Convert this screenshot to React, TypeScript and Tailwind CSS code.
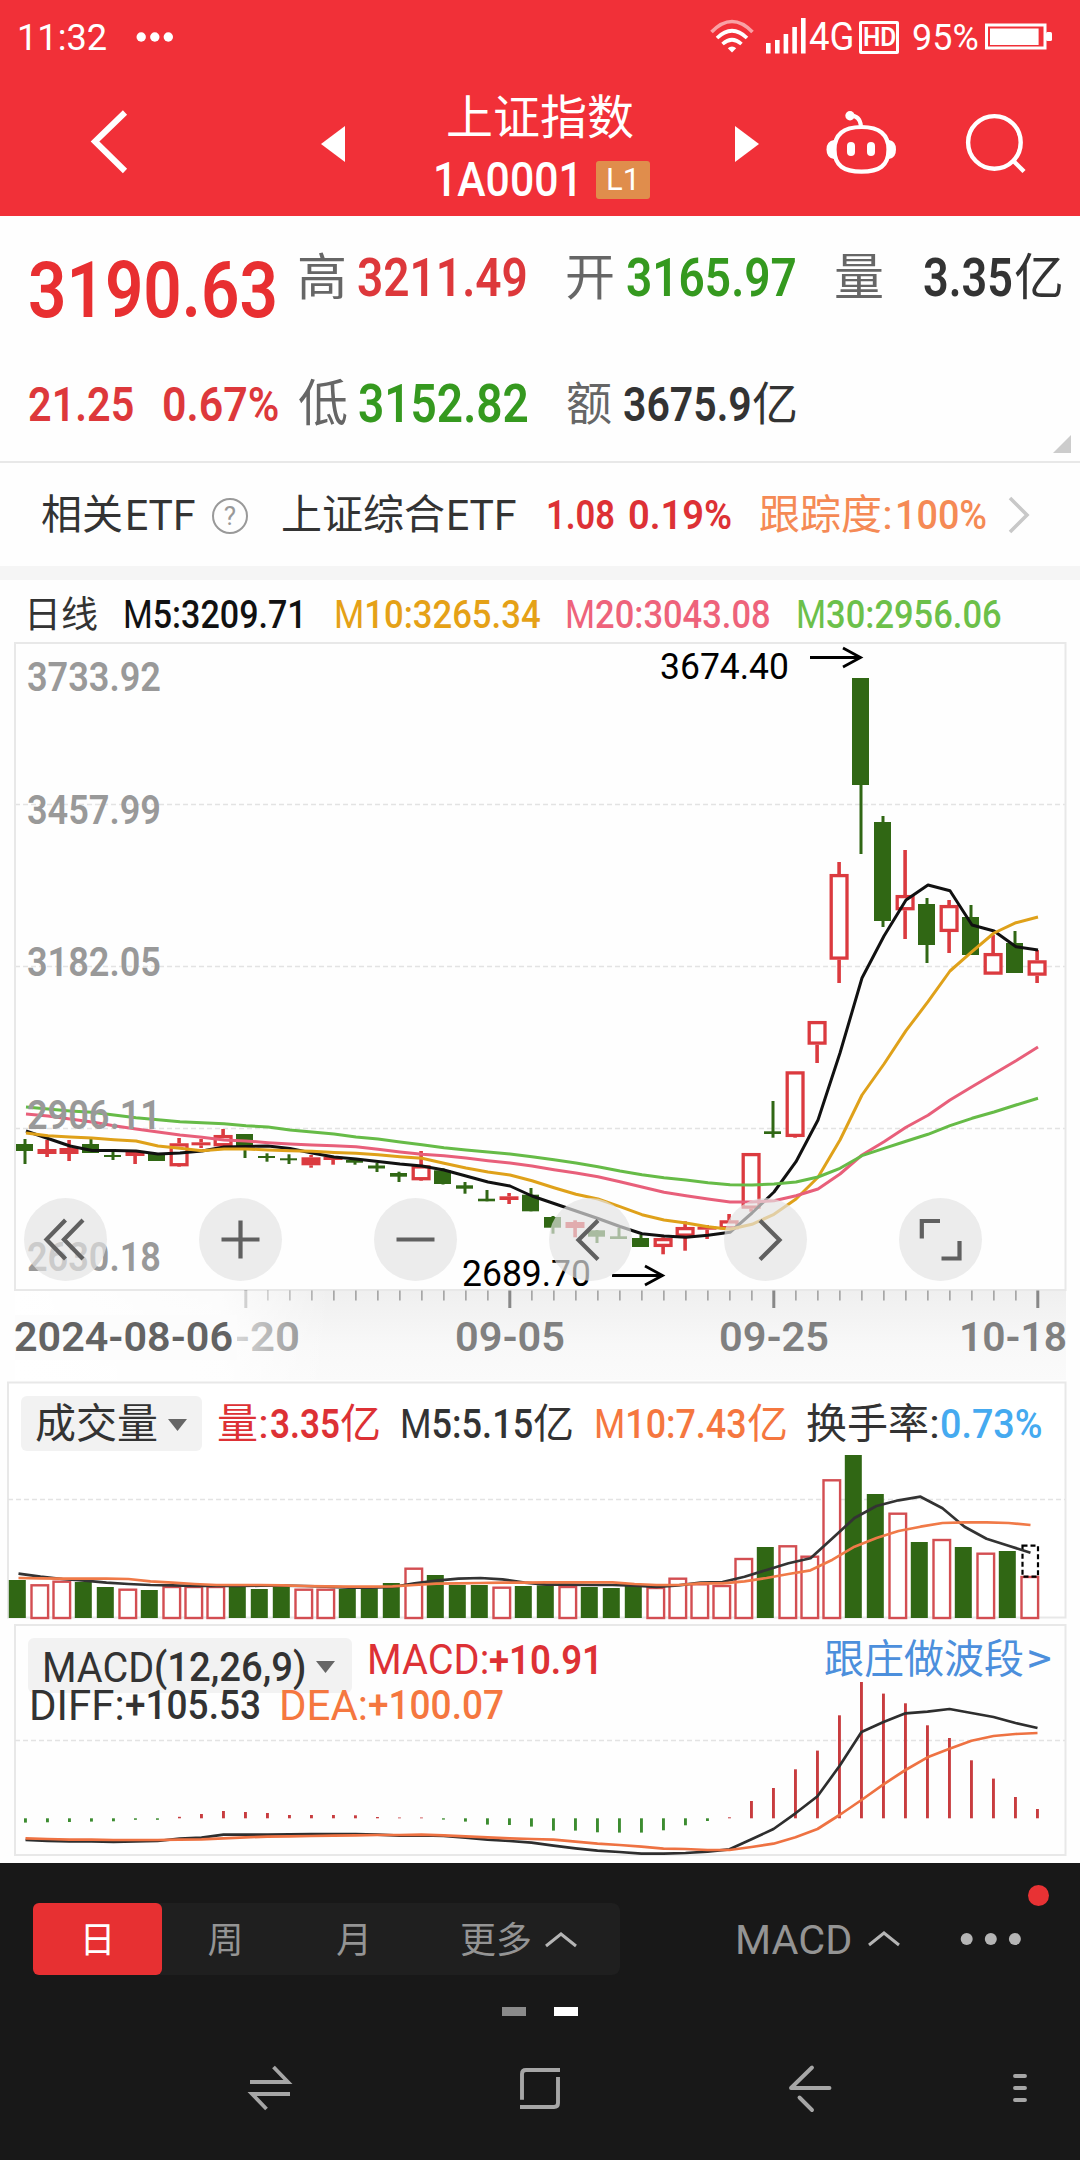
import { useLayoutEffect, useRef } from 'react';
import type { ReactNode } from 'react';

type Candle = [high: number, top: number, bottom: number, low: number, up: number];

const STEP = 22;
const RED = '#db3a3f';
const GREEN = '#306714';

const candles: Candle[] = [
  [1139, 1144, 1151, 1164, 0],
  [1140, 1149, 1154, 1157, 1],
  [1140, 1148, 1154, 1161, 1],
  [1139, 1144, 1153, 1153, 0],
  [1152, 1155, 1157, 1160, 0],
  [1151, 1152, 1156, 1164, 1],
  [1154, 1154, 1161, 1161, 0],
  [1138, 1143.3, 1166.3, 1167, 1],
  [1139, 1142.3, 1145.3, 1148, 1],
  [1129, 1135, 1146.3, 1146.3, 1],
  [1134, 1134, 1146.3, 1158, 0],
  [1153.3, 1156, 1158, 1161.7, 0],
  [1154.3, 1158.3, 1160.3, 1164, 0],
  [1155, 1157.3, 1165.3, 1167.7, 1],
  [1156.7, 1156.7, 1160, 1164.7, 1],
  [1159, 1160, 1162.7, 1164.7, 0],
  [1163, 1165.5, 1168.5, 1172, 0],
  [1171.7, 1173, 1176.7, 1182, 0],
  [1151, 1165.3, 1180.3, 1181, 1],
  [1168.3, 1170.3, 1184, 1184.5, 0],
  [1182, 1185.3, 1188.7, 1193.7, 0],
  [1190, 1198.7, 1201.3, 1201.3, 0],
  [1193, 1196.3, 1200, 1204, 1],
  [1188, 1194.7, 1211.3, 1211.3, 0],
  [1216, 1217, 1227.7, 1233.7, 0],
  [1220.3, 1222, 1228, 1237.3, 1],
  [1230, 1230.3, 1236.7, 1243, 0],
  [1227.7, 1236.3, 1239, 1239, 0],
  [1234.7, 1238, 1247, 1247, 0],
  [1237.3, 1238, 1247, 1254.3, 1],
  [1221.3, 1227, 1236.7, 1250.7, 1],
  [1225, 1226.7, 1229.7, 1239, 1],
  [1214, 1220.3, 1229.3, 1229.3, 1],
  [1153, 1153, 1208.7, 1211.7, 1],
  [1101, 1131.3, 1134, 1137.7, 0],
  [1071.3, 1071.3, 1137, 1137.7, 1],
  [1021, 1021, 1044.7, 1063, 1],
  [862, 874, 959.7, 983, 1],
  [678, 678, 785, 854, 0],
  [816, 822, 921, 927, 0],
  [850, 895, 910.3, 939, 1],
  [898, 904, 945, 963, 0],
  [900, 905, 932, 953, 1],
  [905, 917, 955, 955, 0],
  [935, 953, 974.7, 974.7, 1],
  [931, 943, 973, 973, 0],
  [950, 960.3, 975.7, 983, 1],
];

const ma5 = [
  1131, 1138.5, 1146, 1150.5, 1150.5, 1151, 1154, 1153, 1151, 1147, 1146.5, 1146, 1148.5, 1153, 1157,
  1159, 1161.5, 1164, 1166, 1170, 1176, 1182, 1186, 1196, 1203.5, 1211, 1218.5, 1226.5, 1233.7, 1236,
  1237.3, 1235.3, 1232.3, 1213, 1192, 1161.7, 1120, 1053, 978, 936, 900, 885, 890.7, 925, 931, 946.7,
  950,
];
const ma10 = [
  1133, 1135.7, 1137, 1138, 1139.7, 1141, 1146, 1148.3, 1150.7, 1149, 1149, 1150, 1150.7, 1151.3,
  1152.5, 1153.3, 1154.7, 1156.7, 1158.3, 1163.3, 1168, 1172, 1175, 1180.7, 1187.7, 1194.3, 1199,
  1206.7, 1214.7, 1220, 1223, 1226.7, 1229.3, 1224.3, 1214.3, 1199, 1177.3, 1140, 1095, 1064, 1030.7,
  1001.7, 971, 951.7, 933, 922.7, 917,
];
const ma20 = [
  1114, 1116, 1119, 1122, 1125.7, 1129, 1132, 1135, 1137.3, 1140, 1141, 1142.7, 1144, 1145, 1145.7,
  1146.7, 1149.3, 1152, 1154.3, 1155.7, 1158, 1160.7, 1163, 1166, 1169.7, 1173, 1176.7, 1181.7, 1187,
  1192.3, 1195.7, 1199, 1202, 1202, 1200.7, 1195.7, 1189, 1174, 1155, 1141.7, 1127.3, 1115.3, 1100,
  1086.7, 1073.7, 1060.7, 1047,
];
const ma30 = [
  1107, 1109, 1111, 1112.3, 1115, 1117.7, 1119.7, 1121.7, 1122.7, 1123.7, 1125.7, 1127, 1130, 1132,
  1134, 1137, 1139, 1142, 1144.7, 1147.7, 1150, 1152, 1154, 1156.7, 1159.7, 1163, 1166.7, 1171,
  1174.7, 1177.7, 1180, 1182.7, 1184.7, 1185, 1184, 1182, 1177, 1168.3, 1155.7, 1148.3, 1141.3,
  1134.3, 1125.7, 1118.3, 1112, 1105, 1098.3,
];

const volumes = [
  1580, 1584.3, 1580.7, 1582, 1587, 1588.7, 1590, 1586, 1586, 1586, 1586, 1589, 1586, 1588.7, 1588.7,
  1589, 1588.3, 1583, 1567.7, 1575, 1585, 1585, 1586.7, 1586, 1585.3, 1586, 1587, 1588, 1586, 1587,
  1577.7, 1583.3, 1585, 1558, 1547, 1545.3, 1555.7, 1479.3, 1455, 1494, 1512.7, 1542, 1539, 1547,
  1552.7, 1551, 1576,
];
const volMa5 = [
  1573.7, 1576.7, 1579, 1580.7, 1582.7, 1584, 1585, 1585.3, 1586, 1586, 1586, 1585.7, 1585.7, 1586,
  1586.7, 1587.7, 1587.7, 1587, 1583.3, 1580.7, 1578.7, 1578, 1579.3, 1582.7, 1584.7, 1584.7, 1585,
  1585, 1585.7, 1587, 1585.3, 1582.7, 1582, 1576.7, 1570, 1563.3, 1558.3, 1538.3, 1518, 1506, 1500.3,
  1496.7, 1508.3, 1526.7, 1538.7, 1545.7, 1552.7,
];
const volMa10 = [
  1578, 1578.3, 1578.7, 1578.7, 1578.7, 1579, 1581.3, 1582.7, 1584, 1585, 1585, 1585, 1585.3, 1586,
  1586.3, 1586.7, 1586.7, 1586.3, 1585, 1583.7, 1583.3, 1583, 1582.7, 1582.7, 1582.3, 1582.3, 1582.3,
  1582.3, 1584, 1585, 1585, 1583.3, 1583.3, 1581.3, 1578, 1574, 1570.3, 1559.7, 1546.7, 1538, 1531,
  1526.7, 1523, 1522.3, 1522.3, 1523, 1525,
];

// signed bar lengths in px, negative values hang below the zero line
const macd = [
  -4.3, -4, -3.7, -3.3, -3, -1.5, -1.5, 1.5, 4.3, 7.3, 6.3, 5.3, 3.3, 3.3, 3.3, 3, 1.3, 0.8, 0.8,
  -1.3, -3.3, -6.3, -6.7, -8.3, -12.3, -12.3, -14, -14.3, -14.3, -12, -7, -2.7, 1, 17.3, 30.3, 49,
  67.7, 103, 136.3, 124.7, 115, 93, 80.3, 58, 39.7, 21.3, 9.3,
];
const diff = [
  1840, 1841, 1841.3, 1841.3, 1842, 1841.3, 1841, 1838.7, 1837.7, 1834.7, 1834.7, 1834.7, 1834.3,
  1834, 1834, 1834, 1834.7, 1835.7, 1835.3, 1836, 1837.7, 1839.7, 1841, 1842.7, 1845.7, 1848.3,
  1850.7, 1852, 1853.7, 1853.7, 1853, 1851.7, 1849.3, 1839.3, 1829, 1813.3, 1796.3, 1766, 1732, 1722,
  1713.3, 1711.7, 1709, 1713, 1717, 1723, 1728,
];
const dea = [
  1838.3, 1839, 1839.7, 1839.7, 1840, 1840, 1840, 1839.7, 1839.3, 1838.3, 1837.3, 1836.7, 1836.3,
  1836, 1835.7, 1835.3, 1835, 1835, 1834.7, 1835.3, 1836.3, 1837.3, 1838.3, 1839, 1839.7, 1841.7,
  1843.7, 1845, 1846.7, 1848.7, 1849, 1850, 1850, 1847, 1843.7, 1837.3, 1829, 1815, 1800, 1784.3,
  1770, 1757.3, 1748.7, 1740.7, 1736, 1734, 1733,
];

const toPoints = (values: number[], start: number) =>
  values.map((y, i) => `${start + i * STEP},${y}`).join(' ');

interface FitProps {
  className?: string;
  children: ReactNode;
}

// Squeezes its text to the width of the box, the figures are set condensed.
const Fit = ({ className = '', children }: FitProps) => {
  const box = useRef<HTMLSpanElement>(null);
  const text = useRef<HTMLSpanElement>(null);

  useLayoutEffect(() => {
    if (!box.current || !text.current) return;
    const ratio = box.current.offsetWidth / text.current.offsetWidth;
    text.current.style.transform = `scaleX(${ratio})`;
  }, [children]);

  return (
    <span ref={box} className={`inline-block shrink-0 whitespace-nowrap leading-none ${className}`}>
      <span ref={text} className="inline-block origin-left">
        {children}
      </span>
    </span>
  );
};

const StatusBar = () => (
  <div className="flex h-[74px] items-center text-[37px]">
    <Fit className="ml-[17px] w-[90px]">11:32</Fit>
    <svg className="ml-[29px]" width="37" height="12" viewBox="136 31 37 12" fill="#fff">
      <circle cx="141.2" cy="37" r="4.7" />
      <circle cx="154.8" cy="37" r="4.7" />
      <circle cx="168.3" cy="37" r="4.7" />
    </svg>
    <svg className="ml-[535px] shrink-0" width="100" height="40" viewBox="708 17 100 40">
      <g fill="none" stroke="#fff" strokeWidth="3.6">
        <path d="M711.5 32 Q732 11 752.5 32" opacity=".55" />
        <path d="M717 38 Q732 23.5 747 38" />
        <path d="M722.5 44 Q732 35.5 741.5 44" />
      </g>
      <path d="M732 52.5 l-4.2 -4.2 a6 6 0 0 1 8.4 0z" fill="#fff" />
      <g fill="#fff">
        <rect x="766" y="43" width="4.6" height="10.5" />
        <rect x="775" y="40" width="4.6" height="13.5" />
        <rect x="783.6" y="34" width="4.6" height="19.5" />
        <rect x="792.3" y="27" width="4.6" height="26.5" />
        <rect x="801" y="18" width="4.6" height="35.5" />
      </g>
    </svg>
    <Fit className="ml-px w-[45px] pt-px text-[39px]">4G</Fit>
    <span className="ml-[5px] flex h-[33px] w-[40px] items-center justify-center rounded-[2px] border-[3.5px] border-white">
      <Fit className="w-[33px] text-[26px] font-semibold">HD</Fit>
    </span>
    <Fit className="ml-[13px] w-[67px]">95%</Fit>
    <svg className="ml-[4px]" width="72" height="30" viewBox="983 22 72 30">
      <rect x="986.5" y="25" width="58.5" height="23" fill="none" stroke="#fff" strokeWidth="3" />
      <rect x="990" y="28.5" width="48.6" height="16.5" fill="#fff" />
      <rect x="1046" y="32" width="6" height="9" rx="1.5" fill="#fff" />
    </svg>
  </div>
);

const TitleBar = () => (
  <div className="flex h-[142px] items-center">
    <svg className="ml-[86px]" width="46" height="74" viewBox="86 108 46 74">
      <path d="M125 112.5 L95 141.5 L125 171" fill="none" stroke="#fff" strokeWidth="6" />
    </svg>
    <svg className="ml-[189px]" width="24" height="38" viewBox="321 126 24 38">
      <path d="M345 126 V162 L321 144z" fill="#fff" />
    </svg>
    <div className="ml-[88px] h-full w-[219px]">
      <div className="mt-[14px] ml-[13px] flex h-[58px] items-center text-[47px] leading-none">上证指数</div>
      <div className="flex h-[67px] items-center">
        <Fit className="w-[150px] text-[49px] font-medium">1A0001</Fit>
        <span className="ml-[13px] flex h-[38px] w-[54px] items-center justify-center rounded-[3px] bg-[#e08d4c] text-[31px] leading-none">
          L1
        </span>
      </div>
    </div>
    <svg className="ml-[83px]" width="24" height="38" viewBox="735 126 24 38">
      <path d="M735 126 V162 L759 144z" fill="#fff" />
    </svg>
    <svg className="ml-[65px]" width="74" height="70" viewBox="824 110 74 70">
      <circle cx="850" cy="115.7" r="4.7" fill="#fff" />
      <path d="M850 115.5 Q860 115.5 861 126" fill="none" stroke="#fff" strokeWidth="4" />
      <path
        d="M861.5 127 C879 127 888.5 134 888.5 149.5 C888.5 166 879 171.7 861.5 171.7 C844 171.7 834.5 166 834.5 149.5 C834.5 134 844 127 861.5 127z"
        fill="none"
        stroke="#fff"
        strokeWidth="4.2"
      />
      <path d="M834 140 Q826.5 141 826.5 149.5 Q826.5 158 834 159z" fill="#fff" />
      <path d="M889 140 Q896 141 896 149.5 Q896 158 889 159z" fill="#fff" />
      <rect x="847" y="142" width="8" height="14" rx="4" fill="#fff" />
      <rect x="867" y="142" width="8" height="14" rx="4" fill="#fff" />
    </svg>
    <svg className="ml-[66px]" width="64" height="70" viewBox="964 110 64 70">
      <circle cx="994.4" cy="142.4" r="26.3" fill="none" stroke="#fff" strokeWidth="4.4" />
      <path d="M1013 160.5 L1024 171.5" stroke="#fff" strokeWidth="4.4" />
    </svg>
  </div>
);

const Quote = () => (
  <section className="relative h-[247px] border-b-2 border-[#e8e8e8] text-[50px] leading-none text-[#666]">
    <div className="flex h-[121px] items-center pt-[2px]">
      <Fit className="mt-[27px] ml-[28px] w-[250px] text-[77px] font-semibold text-[#e82f31]">3190.63</Fit>
      <span className="ml-[19px]">高</span>
      <Fit className="mt-[2px] ml-[10px] w-[171px] text-[53px] font-semibold text-[#dd383b]">3211.49</Fit>
      <span className="ml-[37px]">开</span>
      <Fit className="mt-[2px] ml-[11px] w-[171px] text-[53px] font-semibold text-[#35991f]">3165.97</Fit>
      <span className="ml-[37px]">量</span>
      <Fit className="mt-[2px] ml-[39px] w-[90px] text-[53px] font-semibold text-[#333]">3.35</Fit>
      <span className="ml-px text-[#333]">亿</span>
    </div>
    <div className="mt-[36px] flex h-[60px] items-center pt-[2px]">
      <Fit className="mt-px ml-[28px] w-[106px] text-[48px] font-semibold text-[#dd383b]">21.25</Fit>
      <Fit className="mt-px ml-[28px] w-[117px] text-[48px] font-semibold text-[#dd383b]">0.67%</Fit>
      <span className="ml-[19px]">低</span>
      <Fit className="ml-[10px] w-[171px] text-[53px] font-semibold text-[#35991f]">3152.82</Fit>
      <span className="ml-[37px] text-[46px]">额</span>
      <Fit className="mt-px ml-[11px] w-[129px] text-[48px] font-semibold text-[#333]">3675.9</Fit>
      <span className="text-[46px] text-[#333]">亿</span>
    </div>
    <svg className="absolute right-[9px] bottom-[8px]" width="18" height="18" viewBox="0 0 18 18">
      <path d="M18 0 V18 H0z" fill="#ccc" />
    </svg>
  </section>
);

const EtfBar = () => (
  <section className="flex h-[117px] items-center border-b-[14px] border-[#f5f5f5] pt-[2px] text-[41px] leading-none text-[#333]">
    <span className="ml-[41px]">相关</span>
    <Fit className="ml-[2px] w-[71px] text-[42px]">ETF</Fit>
    <span className="ml-[16px] flex size-[36px] items-center justify-center rounded-full border-2 border-[#999] text-[26px] text-[#999]">
      ?
    </span>
    <span className="ml-[33px]">上证综合</span>
    <Fit className="ml-px w-[71px] text-[42px]">ETF</Fit>
    <Fit className="ml-[29px] w-[69px] font-semibold text-[#dd3135]">1.08</Fit>
    <Fit className="ml-[13px] w-[104px] font-semibold text-[#dd3135]">0.19%</Fit>
    <span className="ml-[27px] text-[#f58a55]">跟踪度</span>
    <Fit className="w-[11px] text-[#f58a55]">:</Fit>
    <Fit className="ml-[2px] w-[92px] font-medium text-[#f58a55]">100%</Fit>
    <svg className="ml-[20px]" width="26" height="40" viewBox="0 0 26 40">
      <path d="M3 2 L20 19 L3 36" fill="none" stroke="#c8c8c8" strokeWidth="3.6" />
    </svg>
  </section>
);

const MaLegend = () => (
  <div className="flex h-[60px] items-center pt-[11px] text-[38.5px] leading-none font-medium">
    <span className="ml-[24px] text-[37px] font-normal text-[#333]">日线</span>
    <Fit className="ml-[25px] w-[184px] text-[#111]">
      <span className="font-normal">M</span>5:3209.71
    </Fit>
    <Fit className="ml-[27px] w-[207px] text-[#e5a117]">
      <span className="font-normal">M</span>10:3265.34
    </Fit>
    <Fit className="ml-[24px] w-[206px] text-[#ee637b]">
      <span className="font-normal">M</span>20:3043.08
    </Fit>
    <Fit className="ml-[25px] w-[206px] text-[#6cc04a]">
      <span className="font-normal">M</span>30:2956.06
    </Fit>
  </div>
);

interface LabelProps {
  x: number;
  y: number;
  width: number;
  fill: string;
  children: string;
}

const AxisLabel = ({ x, y, width, fill, children }: LabelProps) => (
  <text
    x={x}
    y={y}
    fill={fill}
    textLength={width}
    lengthAdjust="spacingAndGlyphs"
    className="text-[41px] font-semibold">
    {children}
  </text>
);

const KLine = () => (
  <svg className="block" width="1080" height="740" viewBox="0 640 1080 740">
    <defs>
      <linearGradient id="axisShade" x1="0" y1="0" x2="0" y2="1">
        <stop offset="0" stopColor="#efefef" />
        <stop offset=".6" stopColor="#f8f8f8" />
        <stop offset="1" stopColor="#fafafa" />
      </linearGradient>
      <linearGradient id="axisFade" x1="0" y1="0" x2="1" y2="0">
        <stop offset="0" stopColor="#fff" stopOpacity="1" />
        <stop offset=".65" stopColor="#fff" stopOpacity=".8" />
        <stop offset="1" stopColor="#fff" stopOpacity="0" />
      </linearGradient>
    </defs>
    <g stroke="#e3e3e3" strokeWidth="1.3" strokeDasharray="5 3">
      <path d="M15 804.5 H1065" />
      <path d="M15 966.5 H1065" />
      <path d="M15 1128.5 H1065" />
    </g>
    <rect x="15" y="1290" width="1051" height="90" fill="url(#axisShade)" />
    <rect x="15" y="643" width="1050.5" height="647" fill="none" stroke="#e8e8e8" strokeWidth="2" />

    {candles.map(([high, top, bottom, low, up], i) => {
      const x = 25 + i * STEP;
      if (!up) {
        return (
          <g key={i} fill={GREEN}>
            <rect x={x - 1.5} y={high} width="3" height={low - high} />
            <rect x={x - 9} y={top} width="17" height={bottom - top} />
          </g>
        );
      }
      const tall = bottom - top > 8;
      return (
        <g key={i} fill={RED}>
          <rect x={x - 1.7} y={high} width="3.6" height={Math.max(0, top - high)} />
          <rect x={x - 1.7} y={bottom} width="3.6" height={Math.max(0, low - bottom)} />
          {tall ? (
            <rect
              x={x - 7.8}
              y={top + 1.6}
              width="15.8"
              height={bottom - top - 3.2}
              fill="#fff"
              stroke={RED}
              strokeWidth="3.3"
            />
          ) : (
            <rect x={x - 9.5} y={top} width="19" height={bottom - top} />
          )}
        </g>
      );
    })}

    <g fill="none" strokeWidth="3" strokeLinejoin="round">
      <polyline points={toPoints(ma5, 26)} stroke="#111" />
      <polyline points={toPoints(ma10, 26)} stroke="#dfa11a" />
      <polyline points={toPoints(ma20, 26)} stroke="#e85f7a" />
      <polyline points={toPoints(ma30, 26)} stroke="#66bb47" />
    </g>

    <AxisLabel x={27} y={691} width={134} fill="#999">3733.92</AxisLabel>
    <AxisLabel x={27} y={824} width={134} fill="#999">3457.99</AxisLabel>
    <AxisLabel x={27} y={976} width={134} fill="#999">3182.05</AxisLabel>
    <AxisLabel x={27} y={1129} width={134} fill="#999">2906.11</AxisLabel>
    <AxisLabel x={27} y={1271} width={134} fill="#999">2630.18</AxisLabel>

    <g className="text-[36px]" fill="#000">
      <text x="660" y="678.5" textLength="129" lengthAdjust="spacingAndGlyphs">
        3674.40
      </text>
      <text x="462" y="1285.5" textLength="129" lengthAdjust="spacingAndGlyphs">
        2689.70
      </text>
    </g>
    <g fill="none" stroke="#000" strokeWidth="2.8">
      <path d="M810 657.5 H860 M843 648 L860.5 657.5 L843 667" />
      <path d="M612 1275.5 H662 M645 1266 L662.5 1275.5 L645 1285" />
    </g>

    {candles.map((_, i) => {
      if (i < 10) return null;
      const x = 25.3 + i * STEP;
      const major = (i - 10) % 12 === 0;
      return (
        <rect
          key={i}
          x={major ? x - 1 : x}
          y="1290.5"
          width={major ? 3 : 1.2}
          height={major ? 17.5 : 10}
          fill="#888"
        />
      );
    })}
    <AxisLabel x={184} y={1351} width={116} fill="#808080">08-20</AxisLabel>
    <rect x="15" y="1291" width="315" height="89" fill="url(#axisFade)" />
    <rect x="15" y="1315" width="222" height="45" fill="#fcfcfc" />
    <AxisLabel x={14} y={1351} width={219} fill="#636363">2024-08-06</AxisLabel>
    <AxisLabel x={455} y={1351} width={110} fill="#808080">09-05</AxisLabel>
    <AxisLabel x={719} y={1351} width={110} fill="#808080">09-25</AxisLabel>
    <AxisLabel x={959} y={1351} width={108} fill="#808080">10-18</AxisLabel>
  </svg>
);

const controls = [
  'M41.5 8 L22.5 27.5 L41.5 47 M59 8 L40 27.5 L59 47',
  'M22.5 27.5 H60.5 M41.5 8.5 V46.5',
  'M22.5 27.5 H60.5',
  'M49 8.5 L29.5 28 L49 47.5',
  'M36 8.5 L55.5 28 L36 47.5',
  'M22.8 26.5 V9 H41 M60.5 29 V46.5 H42.5',
];

const ChartControls = () => (
  <div className="absolute top-[558px] left-[24px] flex gap-[92px]">
    {controls.map((d, i) => (
      <button
        key={i}
        className="flex size-[83px] items-center justify-center rounded-full bg-[rgba(227,227,227,0.68)]">
        <svg width="83" height="55" viewBox="0 0 83 55">
          <path d={d} fill="none" stroke="#606060" strokeWidth="4.2" />
        </svg>
      </button>
    ))}
  </div>
);

const Caret = ({ className = '' }: { className?: string }) => (
  <svg className={className} width="19" height="12" viewBox="0 0 19 12">
    <path d="M0 0 H19 L9.5 12z" fill="#666" />
  </svg>
);

const Volume = () => (
  <section className="relative h-[241px]">
    <svg className="block" width="1080" height="241" viewBox="0 1380 1080 241">
      <rect x="8" y="1382.5" width="1057.5" height="235" fill="#fff" stroke="#e8e8e8" strokeWidth="2" />
      <path d="M8 1499.5 H1065" stroke="#e3e3e3" strokeWidth="1.3" strokeDasharray="5 3" />
      {volumes.map((top, i) => {
        const x = 17.3 + i * STEP;
        return candles[i][4] ? (
          <rect
            key={i}
            x={x - 7.8}
            y={top + 1}
            width="16.6"
            height={1617 - top}
            fill="#fff"
            stroke="#d34e52"
            strokeWidth="2.4"
          />
        ) : (
          <rect key={i} x={x - 8.5} y={top} width="17" height={1618 - top} fill={GREEN} />
        );
      })}
      <rect
        x="1022.5"
        y="1545.7"
        width="15.5"
        height="31"
        fill="none"
        stroke="#000"
        strokeWidth="2.2"
        strokeDasharray="5 3"
      />
      <g fill="none" strokeWidth="2.7" strokeLinejoin="round">
        <polyline points={toPoints(volMa5, 18.5)} stroke="#333" />
        <polyline points={toPoints(volMa10, 18.5)} stroke="#f07a48" />
      </g>
    </svg>
    <div className="absolute top-[15px] left-[21px] flex h-[57px] items-center text-[41px] leading-none text-[#333]">
      <button className="flex h-[55px] w-[181px] items-center rounded-md bg-[#f2f2f2] pt-[2px] pl-[14px]">
        成交量
        <Caret className="ml-[10px]" />
      </button>
      <span className="mt-[2px] ml-[15px] text-[#dd3135]">量</span>
      <Fit className="mt-[2px] w-[11px] text-[#dd3135]">:</Fit>
      <Fit className="mt-[2px] ml-px w-[70px] font-semibold text-[#dd3135]">3.35</Fit>
      <span className="mt-[2px] text-[#dd3135]">亿</span>
      <Fit className="mt-[2px] ml-[19px] w-[133px] font-medium">
        <span className="font-normal">M</span>5:5.15
      </Fit>
      <span className="mt-[2px]">亿</span>
      <Fit className="mt-[2px] ml-[20px] w-[153px] font-medium text-[#f5773f]">
        <span className="font-normal">M</span>10:7.43
      </Fit>
      <span className="mt-[2px] text-[#f5773f]">亿</span>
      <span className="mt-[2px] ml-[18px]">换手率</span>
      <Fit className="mt-[2px] w-[11px]">:</Fit>
      <Fit className="mt-[2px] w-[103px] font-medium text-[#45aaf0]">0.73%</Fit>
    </div>
  </section>
);

const Macd = () => (
  <section className="relative h-[242px]">
    <svg className="block" width="1080" height="242" viewBox="0 1621 1080 242">
      <rect x="15" y="1625" width="1050.5" height="230" fill="none" stroke="#e8e8e8" strokeWidth="2" />
      <path d="M15 1740.5 H1065" stroke="#e3e3e3" strokeWidth="1.3" strokeDasharray="5 3" />
      {macd.map((v, i) => (
        <rect
          key={i}
          x={24 + i * STEP}
          y={v > 0 ? 1818.3 - v : 1818.3}
          width="2.9"
          height={Math.abs(v)}
          fill={v > 0 ? '#c83c3f' : '#3c8c30'}
        />
      ))}
      <g fill="none" strokeWidth="2.7" strokeLinejoin="round">
        <polyline points={toPoints(diff, 25.5)} stroke="#2e2e2e" />
        <polyline points={toPoints(dea, 25.5)} stroke="#ee7242" />
      </g>
    </svg>
    <div className="absolute top-[18px] left-0 text-[40px] leading-none text-[#333]">
      <div className="flex h-[45px] items-start">
        <button className="-mt-px ml-[28px] flex h-[55px] w-[324px] items-center rounded-md bg-[#f2f2f2] pt-[5px] pl-[14px]">
          <Fit className="w-[112px] text-left text-[42px]">MACD</Fit>
          <Fit className="w-[152px] text-left font-medium">(12,26,9)</Fit>
          <Caret className="-mt-[3px] ml-[10px]" />
        </button>
        <Fit className="ml-[15px] w-[122px] text-[42px] text-[#dd3135]">MACD:</Fit>
        <Fit className="mt-px w-[114px] text-[41px] font-semibold text-[#dd3135]">+10.91</Fit>
        <span className="mt-px ml-[221px] text-[#4c8fdc]">跟庄做波段</span>
        <Fit className="ml-[2px] w-[26px] text-[#4c8fdc]">&gt;</Fit>
      </div>
      <div className="relative flex h-[43px] items-center">
        <Fit className="ml-[29px] w-[96px] text-[42px]">DIFF:</Fit>
        <Fit className="w-[136px] font-medium">+105.53</Fit>
        <Fit className="ml-[18px] w-[89px] text-[42px] text-[#f5773f]">DEA:</Fit>
        <Fit className="w-[136px] font-medium text-[#f5773f]">+100.07</Fit>
      </div>
    </div>
  </section>
);

const ChevronUp = ({ className = '' }: { className?: string }) => (
  <svg className={className} width="36" height="20" viewBox="0 0 36 20">
    <path d="M3 16 L18 4 L33 16" fill="none" stroke="#b5b5b5" strokeWidth="3" />
  </svg>
);

const BottomBar = () => (
  <footer className="h-[297px] bg-[#181818] pt-[40px] text-[36px] leading-none text-[#949494]">
    <div className="relative flex h-[72px] items-center">
      <div className="ml-[33px] flex h-[72px] w-[587px] items-center rounded-lg bg-[#1f1f1f]">
        <button className="flex h-full w-[129px] items-center justify-center rounded-md bg-[#e73032] pt-[4px] text-white">
          日
        </button>
        <button className="w-[127px] pt-[4px]">周</button>
        <button className="w-[130px] pt-[4px]">月</button>
        <button className="ml-[41px] flex items-center pt-[4px]">
          更多
          <ChevronUp className="-mt-[3px] ml-[11px]" />
        </button>
      </div>
      <Fit className="ml-[115px] w-[117px] pt-[3px] text-[41px]">MACD</Fit>
      <ChevronUp className="ml-[14px]" />
      <svg className="ml-[56px]" width="66" height="14" viewBox="958 1932 66 14" fill="#b5b5b5">
        <circle cx="966.7" cy="1939" r="6" />
        <circle cx="990.8" cy="1939" r="6" />
        <circle cx="1014.9" cy="1939" r="6" />
      </svg>
      <span className="absolute -top-[18px] right-[31px] size-[21px] rounded-full bg-[#e83234]" />
    </div>
    <div className="mt-[32px] flex justify-center gap-[28px]">
      <span className="h-[9px] w-[24px] bg-[#8a8a8a]" />
      <span className="h-[9px] w-[24px] bg-white" />
    </div>
    <nav className="flex h-[144px] items-center">
      <svg className="ml-[246px]" width="48" height="48" viewBox="246 2064 48 48">
        <path
          d="M250 2082 H288 L273.5 2067 M290 2094 H252 L266.5 2109"
          fill="none"
          stroke="#a6a6a6"
          strokeWidth="3.8"
        />
      </svg>
      <svg className="ml-[222px]" width="48" height="48" viewBox="516 2064 48 48">
        <path
          d="M522 2099.7 V2074 Q522 2070 526 2070 H560 M558 2077 V2103 Q558 2107 554 2107 H520"
          fill="none"
          stroke="#a6a6a6"
          strokeWidth="3.9"
        />
      </svg>
      <svg className="ml-[222px]" width="48" height="50" viewBox="786 2063 48 50">
        <path
          d="M829.5 2088 H791 L812 2067.5 M799.5 2097.5 L812 2110"
          fill="none"
          stroke="#a6a6a6"
          strokeWidth="3.9"
          strokeLinecap="round"
          strokeLinejoin="round"
        />
      </svg>
      <svg className="ml-[177px]" width="18" height="30" viewBox="1011 2073 18 30">
        <path
          d="M1015 2076 H1025 M1015 2088 H1025 M1015 2100 H1025"
          stroke="#a6a6a6"
          strokeWidth="3.9"
          strokeLinecap="round"
        />
      </svg>
    </nav>
  </footer>
);

const App = () => {
  return (
    <div
      lang="zh-CN"
      className="h-[2160px] w-[1080px] overflow-hidden bg-[#fefefe] font-[Roboto,'Noto_Sans_CJK_SC',sans-serif]">
      <header className="h-[216px] bg-[#f13038] text-white">
        <StatusBar />
        <TitleBar />
      </header>
      <Quote />
      <EtfBar />
      <MaLegend />
      <div className="relative">
        <KLine />
        <ChartControls />
      </div>
      <Volume />
      <Macd />
      <BottomBar />
    </div>
  );
};

export default App;
